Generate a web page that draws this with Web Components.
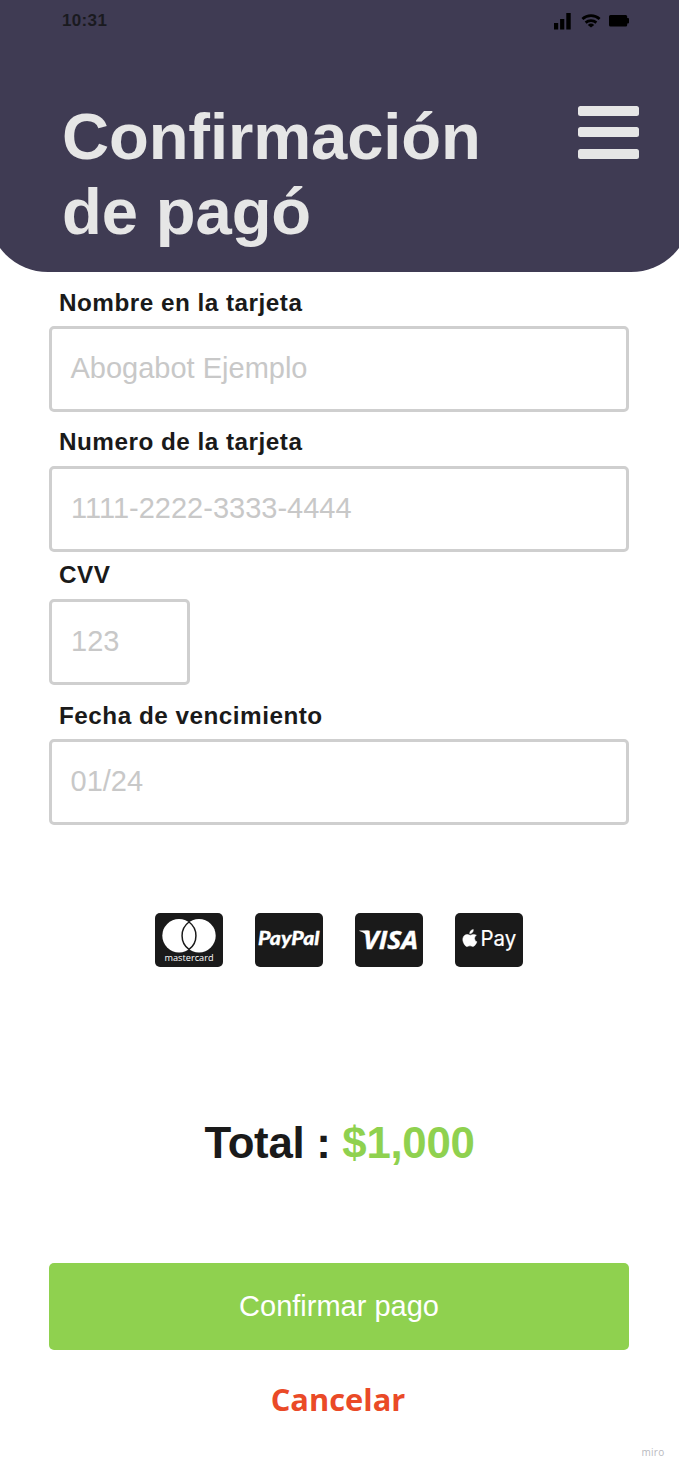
<!DOCTYPE html>
<html lang="es">
<head>
<meta charset="utf-8">
<title>Confirmación de pago</title>
<style>
html,body{margin:0;padding:0;background:#fff}
body{width:679px;height:1471px;overflow:hidden;font-family:"Liberation Sans",Arial,sans-serif;color:#1a1a1a}
</style>
</head>
<body>
<payment-screen></payment-screen>
<script>
const define = (name, html) => {
  const template = document.createElement('template');
  template.innerHTML = html;
  customElements.define(name, class extends HTMLElement {
    constructor() {
      super();
      this.attachShadow({ mode: 'open' }).append(template.content.cloneNode(true));
    }
  });
};

define('status-bar', `
<style>
:host{display:flex;justify-content:space-between;box-sizing:border-box;height:42px;padding:0 50px 0 62px}
time{font-weight:700;font-size:17px;line-height:42px;letter-spacing:.35px;color:#1a1a1f}
svg{display:block}
</style>
<time>10:31</time>
<svg width="76" height="42" viewBox="553 0 76 42">
  <path d="M554 23h4.2v6.6H554zM560.1 19h4.2v10.6h-4.2zM566.3 13h4.4v16.6h-4.4z"/>
  <g fill="none" stroke="#000" stroke-width="2.7">
    <path d="M582.4 19.1a12.6 12.6 0 0 1 17.2 0"/>
    <path d="M585.6 22.6a8.3 8.3 0 0 1 10.8 0"/>
  </g>
  <path d="M587.8 24.9a5 5 0 0 1 6.4 0L591 27.6z"/>
  <path d="M610.5 15h15.2q1.5 0 1.5 1.5v1.6h.8q1 0 1 1v3.4q0 1-1 1h-.8v1.4q0 1.5-1.5 1.5h-15.2q-1.5 0-1.5-1.5v-8.4q0-1.5 1.5-1.5z"/>
</svg>`);

define('menu-icon', `
<style>
:host{display:grid;grid-template-rows:repeat(3,10px);row-gap:11.3px;width:60.5px}
i{background:#e6e6e6;border-radius:2.5px}
</style><i></i><i></i><i></i>`);

define('page-header', `
<style>
:host{display:block;box-sizing:border-box;height:272px;margin:0 -12px;padding:0 12px;background:#3f3b53;border-radius:0 0 60px 60px}
.row{display:flex;justify-content:space-between;align-items:flex-start;padding:57px 40.5px 0 62px}
h1{margin:0;width:450px;font-size:65.2px;line-height:75px;letter-spacing:-.12px;font-weight:700;color:#e6e6e6}
menu-icon{margin-top:7px}
</style>
<status-bar></status-bar>
<div class="row"><h1><slot></slot></h1><menu-icon></menu-icon></div>`);

define('form-field', `
<style>
:host{display:block}
.label{box-sizing:border-box;height:36.5px;padding-left:10px;font-weight:700;font-size:24.3px;line-height:26.6px;letter-spacing:.49px;white-space:nowrap}
.box{box-sizing:border-box;height:86px;border:3px solid #cfcfcf;border-radius:5px;padding:0 0 2px var(--inset,18.5px);font-size:29px;line-height:78px;color:#c8c8c8;white-space:nowrap}
</style>
<div class="label"><slot name="label"></slot></div>
<div class="box"><slot></slot></div>`);

define('card-badge', `
<style>
:host{display:block;width:68px;height:54px;border-radius:5px;background:#1a1a1a;overflow:hidden}
</style><slot></slot>`);

define('payment-methods', `
<style>
:host{display:flex;justify-content:center;gap:32px}
svg{display:block;fill:#fff}
</style>
<card-badge><svg width="68" height="54">
  <circle cx="24" cy="22.7" r="16.7"/><circle cx="44" cy="22.7" r="16.7"/>
  <path d="M34 9a17 17 0 0 1 0 27.4A17 17 0 0 1 34 9z" stroke="#1a1a1a" stroke-width="1.5"/>
  <text x="9.5" y="47.6" font-family="Open Sans,sans-serif" font-size="8.6" font-weight="500" textLength="49" lengthAdjust="spacingAndGlyphs">mastercard</text>
</svg></card-badge>
<card-badge><svg width="68" height="54">
  <text x="3" y="32.4" font-family="Lato,sans-serif" font-size="18.4" font-weight="900" font-style="italic" stroke="#fff" stroke-width=".3" textLength="61.5" lengthAdjust="spacingAndGlyphs">PayPal</text>
</svg></card-badge>
<card-badge><svg width="68" height="54">
  <path d="M4.3 17.5H13.5L15 27Q11.5 20 4.3 18z"/>
  <text x="8" y="36" font-family="Open Sans,sans-serif" font-size="25" font-weight="700" font-style="italic" stroke="#fff" stroke-width=".4" textLength="55" lengthAdjust="spacingAndGlyphs">VISA</text>
</svg></card-badge>
<card-badge><svg width="68" height="54">
  <path transform="translate(0 .5)" d="M18.3 16q.2 1.8-1 3.1-1.1 1.2-2.6 1.1-.1-1.6 1-2.9 1.1-1.1 2.6-1.3zM21.4 21.8q-1.9 1.1-1.9 3.1 0 2.3 2.4 3.4-.5 1.4-1.4 2.7c-.8 1.1-1.5 2-2.7 2s-1.5-.7-2.8-.7-1.7.7-2.9.7c-1.1 0-1.9-1-2.7-2.1-1.8-2.7-2.1-6-.8-7.9.8-1.3 2.1-2 3.4-2 1.4 0 2.2.7 3.1.7s1.8-.8 3.2-.8q1.8 0 3.1.9z" stroke="#fff" stroke-width=".5"/>
  <text x="25.5" y="33.3" font-family="Inter,sans-serif" font-size="20.8" stroke="#fff" stroke-width=".2" textLength="35.7" lengthAdjust="spacingAndGlyphs">Pay</text>
</svg></card-badge>`);

define('total-line', `
<style>
:host{display:block;padding-left:1px;text-align:center;font-weight:700;font-size:43.8px;letter-spacing:-.3px;line-height:50px;white-space:nowrap}
span{color:#8fd14f}
</style><slot></slot> <span><slot name="amount"></slot></span>`);

define('primary-button', `
<style>
:host{display:block;box-sizing:border-box;height:86.5px;border-radius:5px;background:#8fd14f;color:#fff;font-size:29px;line-height:86.5px;text-align:center}
</style><slot></slot>`);

define('text-button', `
<style>
:host{display:block;padding-right:2px;font:700 30.8px/40px "Open Sans",sans-serif;color:#ea4a27;text-align:center}
</style><slot></slot>`);

define('payment-screen', `
<style>
:host{display:flex;flex-direction:column;box-sizing:border-box;width:679px;height:1471px;overflow:hidden;background:#fff}
main{padding:17.5px 50px 0 49px}
.number{margin-top:17px;--inset:19px}.cvv{margin-top:10.5px;width:141px;--inset:19px}.expiry{margin-top:18px}
payment-methods{margin-top:88px}
total-line{margin-top:150.5px}
primary-button{margin-top:95.5px}
text-button{margin-top:29px}
footer{margin-top:auto;padding:0 14.5px 11px 0;text-align:right;font:400 10px/16px "Open Sans",sans-serif;letter-spacing:.3px;color:#b9b9c0}
</style>
<page-header>Confirmación<br>de pagó</page-header>
<main>
  <form-field><span slot="label">Nombre en la tarjeta</span>Abogabot Ejemplo</form-field>
  <form-field class="number"><span slot="label">Numero de la tarjeta</span>1111-2222-3333-4444</form-field>
  <form-field class="cvv"><span slot="label">CVV</span>123</form-field>
  <form-field class="expiry"><span slot="label">Fecha de vencimiento</span>01/24</form-field>
  <payment-methods></payment-methods>
  <total-line>Total :<span slot="amount">$1,000</span></total-line>
  <primary-button>Confirmar pago</primary-button>
  <text-button>Cancelar</text-button>
</main>
<footer>miro</footer>`);
</script>
</body>
</html>
